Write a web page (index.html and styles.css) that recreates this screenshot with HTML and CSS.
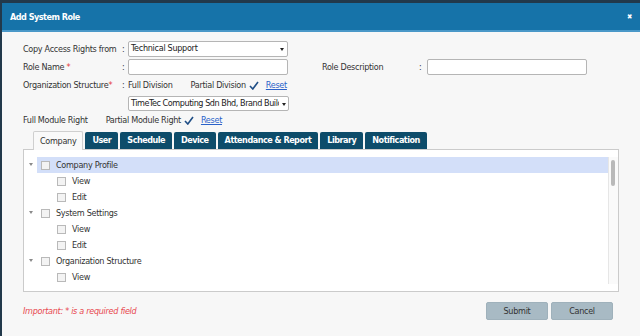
FILE: index.html
```html
<!DOCTYPE html>
<html lang="en">
<head>
    <meta charset="UTF-8">
    <title>Add System Role</title>
    <link rel="stylesheet" href="styles.css">
</head>
<body>
<div class="modal">
    <div class="modal_head">
        <span class="title">Add System Role</span>
        <span class="close">&#10006;</span>
    </div>
    <div class="modal_body">
        <div class="form">
            <div class="row">
                <span class="label">Copy Access Rights from</span>
                <span class="colon">:</span>
                <div class="select">Technical Support<span class="caret"></span></div>
            </div>
            <div class="row">
                <span class="label">Role Name <em class="req">*</em></span>
                <span class="colon">:</span>
                <div class="input"></div>
                <span class="label label_desc">Role Description</span>
                <span class="colon colon_desc">:</span>
                <div class="input"></div>
            </div>
            <div class="row">
                <span class="label">Organization Structure<em class="req">*</em></span>
                <span class="colon">:</span>
                <span class="opt">Full Division</span>
                <span class="opt opt_partial">Partial Division</span>
                <svg class="tick" width="10" height="9" viewBox="0 0 10 9"><path d="M1 5 L3.8 8 L9 1" fill="none" stroke="#1f4e86" stroke-width="1.6"/></svg>
                <a class="reset">Reset</a>
            </div>
            <div class="row row_division">
                <div class="select select_wide">TimeTec Computing Sdn Bhd, Brand Builc<span class="caret"></span></div>
            </div>
            <div class="row row_module">
                <span class="opt">Full Module Right</span>
                <span class="opt opt_module">Partial Module Right</span>
                <svg class="tick" width="10" height="9" viewBox="0 0 10 9"><path d="M1 5 L3.8 8 L9 1" fill="none" stroke="#1f4e86" stroke-width="1.6"/></svg>
                <a class="reset">Reset</a>
            </div>
        </div>

        <div class="tabs">
            <span class="tab active">Company</span>
            <span class="tab">User</span>
            <span class="tab">Schedule</span>
            <span class="tab">Device</span>
            <span class="tab">Attendance &amp; Report</span>
            <span class="tab">Library</span>
            <span class="tab">Notification</span>
        </div>
        <div class="panel">
            <div class="tree">
                <div class="node selected"><span class="arrow"></span><span class="item"><span class="box"></span>Company Profile</span></div>
                <div class="node leaf"><span class="box"></span>View</div>
                <div class="node leaf"><span class="box"></span>Edit</div>
                <div class="node"><span class="arrow"></span><span class="item"><span class="box"></span>System Settings</span></div>
                <div class="node leaf"><span class="box"></span>View</div>
                <div class="node leaf"><span class="box"></span>Edit</div>
                <div class="node"><span class="arrow"></span><span class="item"><span class="box"></span>Organization Structure</span></div>
                <div class="node leaf"><span class="box"></span>View</div>
            </div>
            <div class="scrollbar"><div class="thumb"></div></div>
        </div>

        <div class="footer">
            <span class="note">Important: * is a required field</span>
            <div class="buttons">
                <button type="button" class="btn">Submit</button>
                <button type="button" class="btn">Cancel</button>
            </div>
        </div>
    </div>
</div>
</body>
</html>
```

FILE: styles.css
```css
body {
    margin: 0;
    background-color: #22394b;
    font-family: "DejaVu Sans Condensed", "DejaVu Sans", sans-serif;
    font-size: 9px;
    letter-spacing: -0.3px;
    color: #333;
}

.modal {
    margin: 3px 0 0 2px;
    height: 333px;
    background-color: #f7f7f7;
}

.modal_head {
    height: 27px;
    background-color: #1673a9;
    border-bottom: 2px solid #4a98c8;
    display: flex;
    align-items: center;
    justify-content: space-between;
    padding: 0 8px 0 8px;
    color: #fff;
}

.title {
    font-weight: bold;
    font-size: 9px;
    letter-spacing: -0.5px;
}

.close {
    font-size: 7px;
    font-weight: bold;
}

.modal_body {
    padding: 9px 0 0 21px;
}

.form {
    display: flex;
    flex-direction: column;
    gap: 2px;
}

.row {
    display: flex;
    align-items: center;
    height: 16px;
    white-space: nowrap;
}

.label {
    width: 99px;
}

.label_desc {
    margin-left: 34px;
    width: 97px;
}

.colon {
    width: 6px;
}

.colon_desc {
    width: 8px;
}

.req {
    color: #e5383b;
    font-style: normal;
}

.select,
.input {
    box-sizing: border-box;
    width: 160px;
    height: 16px;
    background-color: #fff;
    border: 1px solid #b5b5b5;
    border-radius: 2px;
    position: relative;
    padding: 1px 0 0 2px;
    color: #222;
    overflow: hidden;
    white-space: nowrap;
}

.select_wide {
    width: 161px;
    height: 15px;
    margin-left: 105px;
    padding-right: 12px;
    letter-spacing: -0.45px;
}

.caret {
    position: absolute;
    right: 3px;
    top: 6px;
    border-left: 2.5px solid transparent;
    border-right: 2.5px solid transparent;
    border-top: 3px solid #222;
}

.select_wide .caret {
    right: 2px;
    box-shadow: 0 0 0 3px #fff;
}

.opt_partial {
    margin-left: 18px;
}

.opt_module {
    margin-left: 18px;
}

.tick {
    margin: 0 0 0 3px;
}

.reset {
    margin-left: 7px;
    color: #2a62c9;
    text-decoration: underline;
}

.row_module {
    margin-top: -1px;
}

.tabs {
    display: flex;
    gap: 2px;
    margin: 3px 0 0 10px;
    height: 18px;
    align-items: flex-end;
}

.tab {
    background-color: #0d4c6a;
    color: #fff;
    font-weight: bold;
    letter-spacing: -0.5px;
    height: 17px;
    line-height: 17px;
    padding: 0 7px;
    border-radius: 2px 2px 0 0;
}

.tab.active {
    background-color: #f9f9f9;
    color: #333;
    font-weight: normal;
    letter-spacing: -0.3px;
    border: 1px solid #cfcfcf;
    border-bottom: none;
    height: 18px;
    line-height: 19px;
    padding: 0 6px;
    position: relative;
    top: 1px;
}

.panel {
    display: flex;
    width: 596px;
    height: 143px;
    box-sizing: border-box;
    border: 1px solid #cbcbcb;
    background-color: #fff;
    padding: 7px 0 7px 0;
}

.tree {
    flex: 1;
}

.node {
    display: flex;
    align-items: center;
    height: 16px;
    padding-left: 5px;
    color: #333;
}

.item {
    flex: 1;
    display: flex;
    align-items: center;
    align-self: stretch;
    padding-left: 4px;
}

.selected .item {
    background-color: #d3dff9;
}

.node.leaf {
    padding-left: 33px;
}

.arrow {
    width: 0;
    height: 0;
    border-left: 2.5px solid transparent;
    border-right: 2.5px solid transparent;
    border-top: 3px solid #8a8a8a;
    margin: 0 4px 2px 0;
}

.box {
    box-sizing: border-box;
    width: 9px;
    height: 9px;
    border: 1px solid #b9b9b9;
    background-color: #f3f3f3;
    margin-right: 6px;
}

.scrollbar {
    width: 9px;
    border-left: 1px solid #e6e6e6;
    background-color: #fafafa;
    padding-top: 3px;
}

.thumb {
    width: 4px;
    height: 26px;
    margin-left: 2px;
    background-color: #b9b9b9;
    border-radius: 2px;
}

.footer {
    display: flex;
    align-items: center;
    justify-content: space-between;
    width: 590px;
    margin-top: 10px;
}

.note {
    color: #e8484f;
    font-style: italic;
}

.buttons {
    display: flex;
    gap: 3px;
}

.btn {
    width: 62px;
    height: 18px;
    background-color: #a8bac4;
    border: 1px solid #9fb1bb;
    border-radius: 2px;
    font-family: inherit;
    font-size: 9px;
    letter-spacing: -0.3px;
    color: #333;
}
```
